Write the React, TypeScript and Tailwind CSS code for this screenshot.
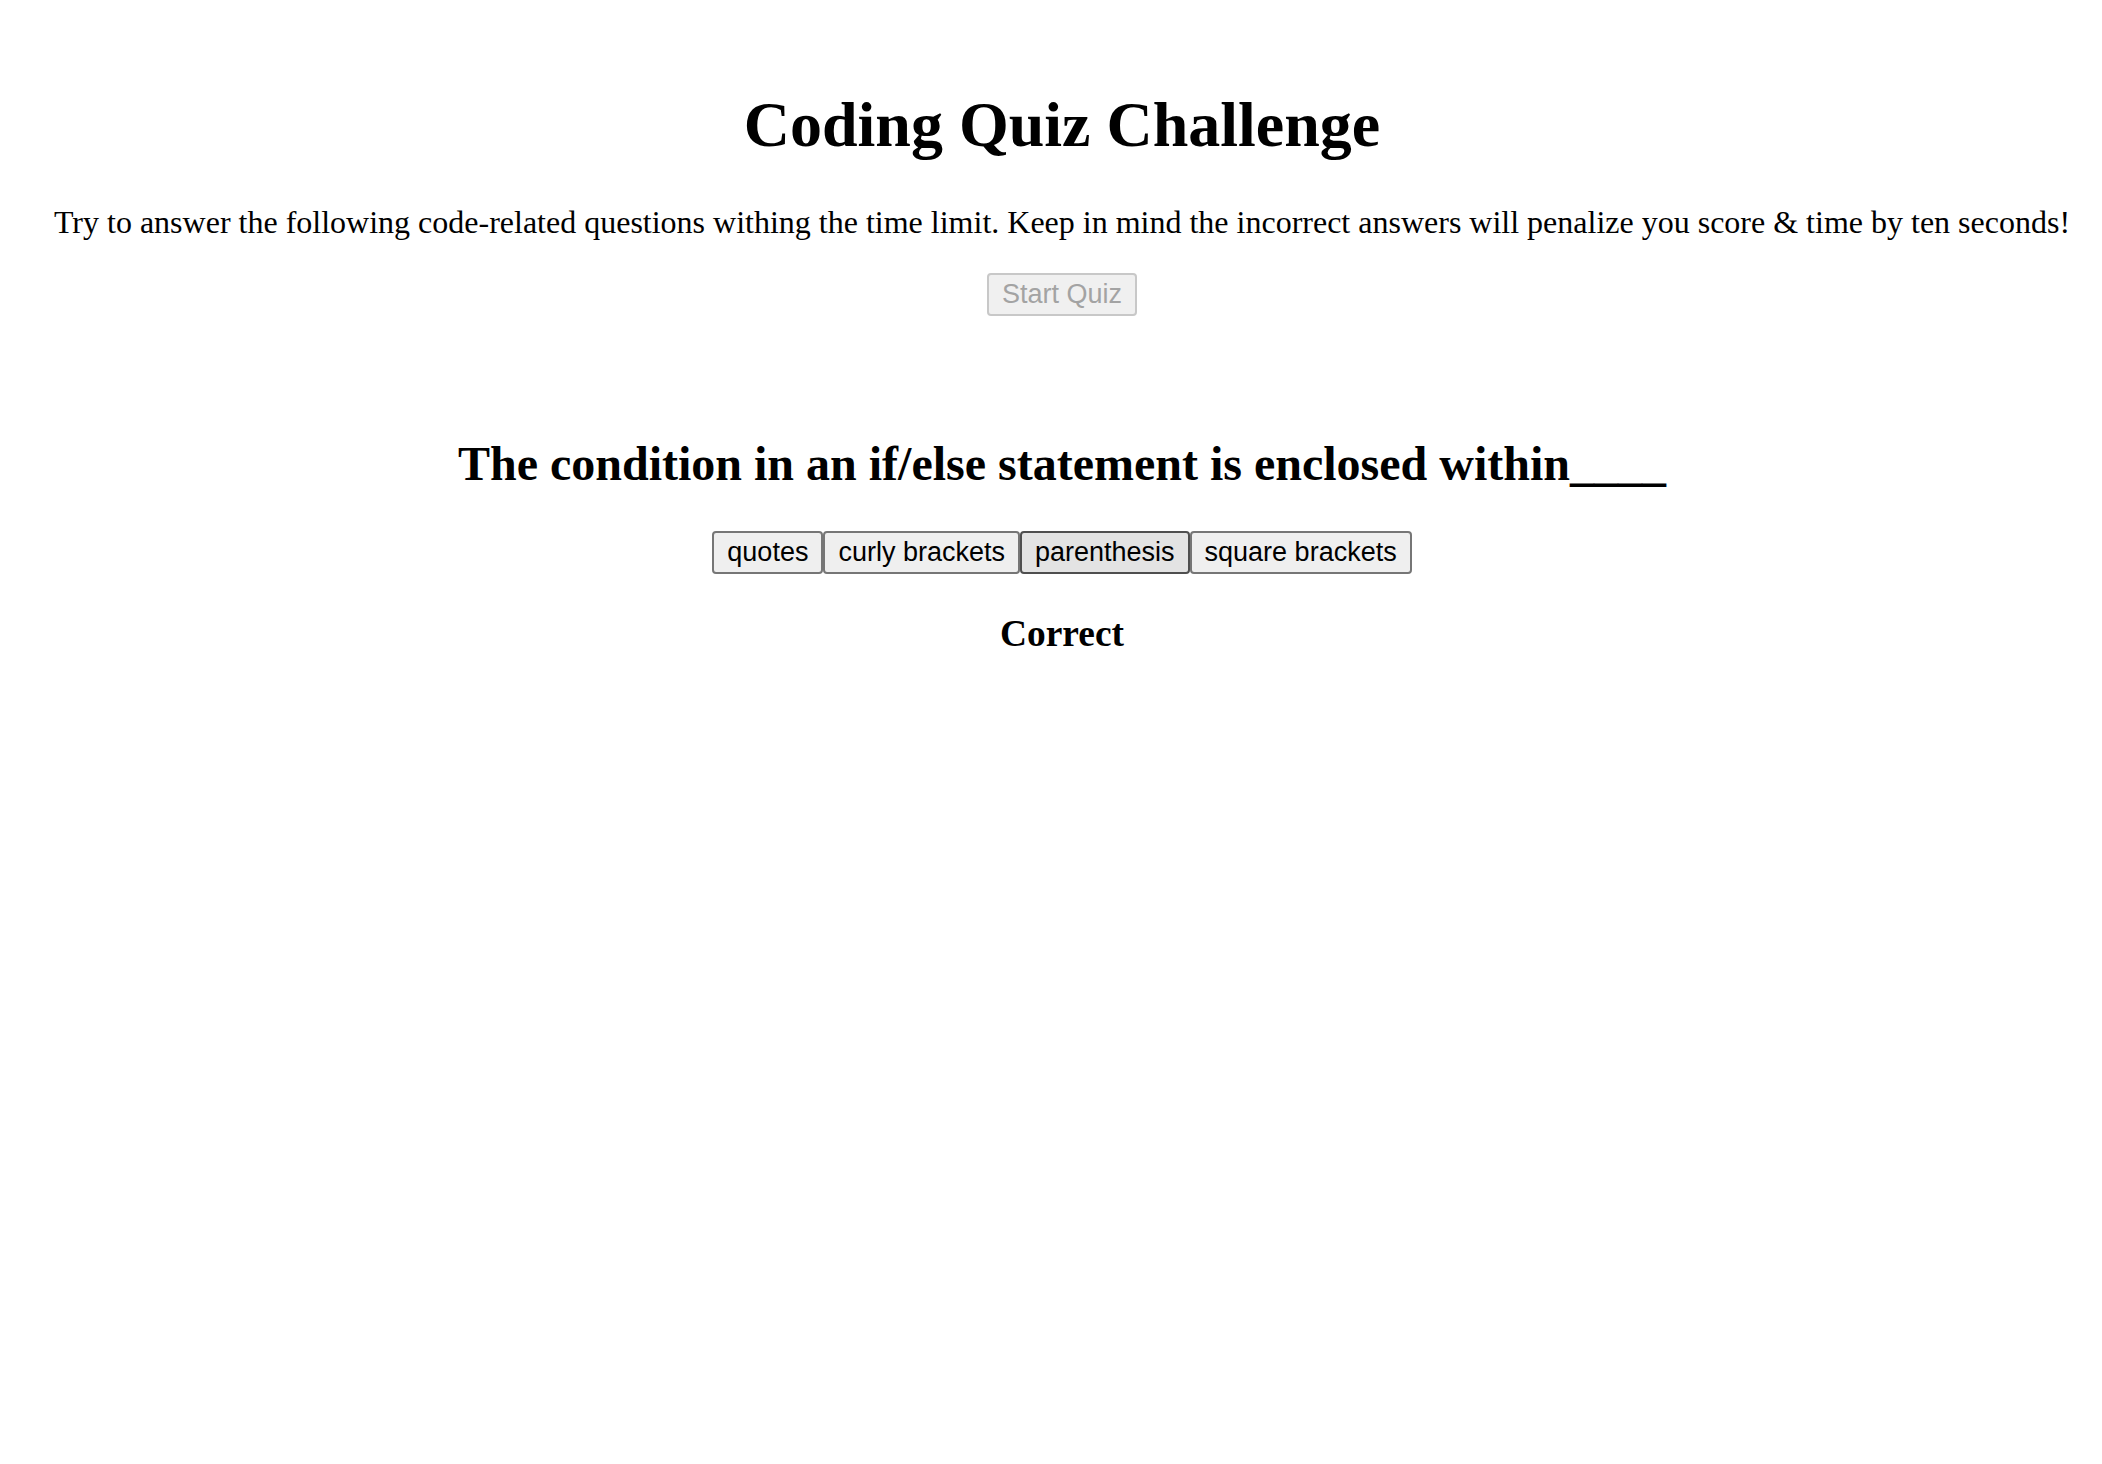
import React from 'react';

const answers = ['quotes', 'curly brackets', 'parenthesis', 'square brackets'];

const App: React.FC = () => {
  return (
    <div className="min-h-screen bg-white text-black text-center pl-[38px] pr-[16px] pt-[45px]" style={{ fontFamily: '"Liberation Serif", "Times New Roman", serif' }}>
      <header>
        <h1 className="text-[64px] font-bold leading-[74px] mt-[43px] mb-[42px]">Coding Quiz Challenge</h1>
        <p className="text-[32px] leading-[37px] mb-[32px]">
          Try to answer the following code-related questions withing the time limit. Keep in mind the incorrect answers will penalize you score &amp; time by ten seconds!
        </p>
        <button
          disabled
          className="text-[27px] leading-[33px] px-[13px] py-[3px] border-2 border-[#c8c8c8] rounded-[4px] bg-[#f0f0f0] text-[#a3a3a3]"
          style={{ fontFamily: '"Liberation Sans", Arial, sans-serif' }}
        >
          Start Quiz
        </button>
      </header>

      <section className="mt-[120px]">
        <h2 className="text-[48px] font-bold leading-[55px] mb-[40px]">The condition in an if/else statement is enclosed within____</h2>
        <div className="flex justify-center">
          {answers.map((a) => (
            <button
              key={a}
              className={
                a === 'parenthesis'
                  ? 'text-[27px] leading-[33px] px-[13px] py-[3px] border-2 border-[#4f4f4f] rounded-[4px] bg-[#e3e3e3] text-black'
                  : 'text-[27px] leading-[33px] px-[13px] py-[3px] border-2 border-[#767676] rounded-[4px] bg-[#efefef] text-black'
              }
              style={{ fontFamily: '"Liberation Sans", Arial, sans-serif' }}
            >
              {a}
            </button>
          ))}
        </div>
        <h3 className="text-[37.44px] font-bold leading-[43px] mt-[38px]">Correct</h3>
      </section>
    </div>
  );
};

export default App;
